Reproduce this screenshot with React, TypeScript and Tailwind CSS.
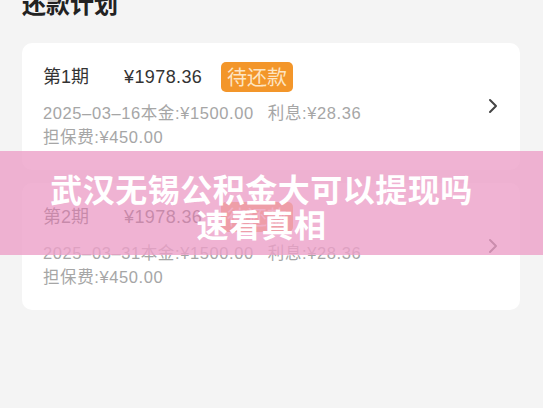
import React from "react";

type Plan = {
  period: string;
  amount: string;
  date: string;
  principal: string;
  interest: string;
  fee: string;
};

const plans: Plan[] = [
  { period: "第1期", amount: "¥1978.36", date: "2025–03–16", principal: "¥1500.00", interest: "¥28.36", fee: "¥450.00" },
  { period: "第2期", amount: "¥1978.36", date: "2025–03–31", principal: "¥1500.00", interest: "¥28.36", fee: "¥450.00" },
];

const Chevron = () => (
  <svg width="10" height="16" viewBox="0 0 10 16" fill="none" className="shrink-0">
    <path d="M2 2l6 6-6 6" stroke="#444" strokeWidth="2" strokeLinecap="round" strokeLinejoin="round" />
  </svg>
);

const PlanCard = ({ plan }: { plan: Plan }) => (
  <div className="flex items-center justify-between bg-white rounded-[10px] pl-[21px] pr-[22px] pt-[19px] pb-[21px]">
    <div className="flex flex-col">
      <div className="flex items-center h-[30px] text-[18px] text-[#333]">
        <span className="w-[81px]">{plan.period}</span>
        <span className="w-[97px] tracking-[0.4px]">{plan.amount}</span>
        <span className="flex items-center justify-center h-[30px] px-[6px] rounded-[5px] bg-[#f3962a] text-[#fde5c4] text-[20px] leading-none [font-family:'Noto_Sans_CJK_SC',sans-serif]">
          待还款
        </span>
      </div>
      <div className="mt-[9px] text-[16.5px] leading-[24px] tracking-[0.6px] text-[#a6a6a6] whitespace-nowrap">
        {plan.date}本金:{plan.principal}
        <span className="ml-[14px]">利息:{plan.interest}</span>
      </div>
      <div className="text-[16.5px] leading-[24px] tracking-[0.6px] text-[#a6a6a6]">担保费:{plan.fee}</div>
    </div>
    <Chevron />
  </div>
);

export default function App() {
  return (
    <div className="relative w-[543px] h-[408px] overflow-hidden bg-[#f4f4f4] [font-family:'Liberation_Sans','Noto_Sans_CJK_SC',sans-serif]">
      <div className="px-[22px] -mt-[12px] text-[24px] leading-[30px] font-bold text-[#222] [font-family:'Noto_Sans_CJK_SC',sans-serif]">
        还款计划
      </div>
      <div className="flex flex-col gap-[13px] px-[22px] pr-[23px] mt-[25px]">
        {plans.map((p) => (
          <PlanCard key={p.period} plan={p} />
        ))}
      </div>
      <div className="absolute left-0 right-0 top-[151px] h-[104px] bg-[#eca0c8]/80 flex flex-col items-center pt-[20px] pr-[20px]">
        <div className="text-white font-bold text-[32px] leading-[35px] tracking-[0.5px] text-center [font-family:'Noto_Sans_CJK_SC',sans-serif]">
          武汉无锡公积金大可以提现吗
          <br />
          速看真相
        </div>
      </div>
    </div>
  );
}
